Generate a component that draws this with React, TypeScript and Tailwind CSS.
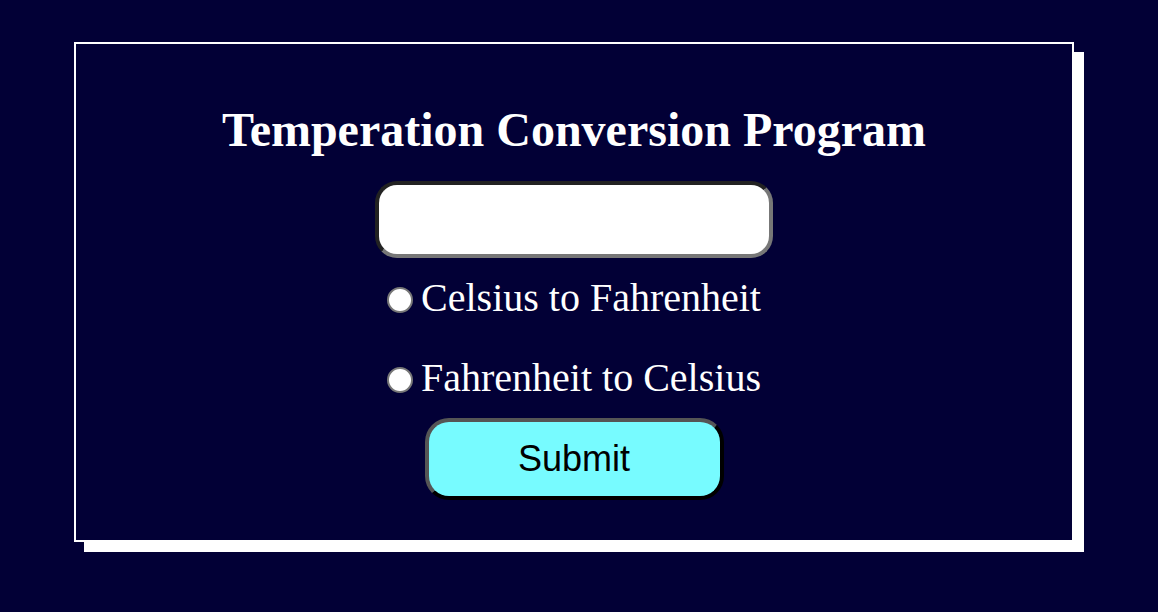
import React, { useState } from 'react';

export default function App() {
  const [value, setValue] = useState('');
  const [mode, setMode] = useState<'c2f' | 'f2c' | ''>('');

  return (
    <div className="min-h-[612px] w-full bg-[#020036] pl-[74px] pt-[42px] pb-[60px]">
      <div className="w-[1000px] h-[500px] border-2 border-white shadow-[10px_10px_0_#ffffff] flex flex-col items-center pt-[62px] font-['Liberation_Serif',serif] text-white">
        <h1 className="text-[48px] font-bold leading-none">Temperation Conversion Program</h1>

        <input
          type="text"
          value={value}
          onChange={(e) => setValue(e.target.value)}
          className="mt-[27px] w-[398px] h-[77px] rounded-[22px] bg-white text-black text-[28px] px-4 outline-none border-4 border-solid border-t-[#222222] border-l-[#222222] border-b-[#777777] border-r-[#777777]"
        />

        <label className="mt-[20px] flex items-center gap-[8px] text-[40px] leading-none">
          <span
            onClick={() => setMode('c2f')}
            className="mt-[4px] w-[26px] h-[26px] rounded-full bg-white border-2 border-[#777777] flex items-center justify-center"
          >
            {mode === 'c2f' && <span className="w-[12px] h-[12px] rounded-full bg-[#1a73e8]" />}
          </span>
          Celsius to Fahrenheit
        </label>

        <label className="mt-[40px] flex items-center gap-[8px] text-[40px] leading-none">
          <span
            onClick={() => setMode('f2c')}
            className="mt-[4px] w-[26px] h-[26px] rounded-full bg-white border-2 border-[#777777] flex items-center justify-center"
          >
            {mode === 'f2c' && <span className="w-[12px] h-[12px] rounded-full bg-[#1a73e8]" />}
          </span>
          Fahrenheit to Celsius
        </label>

        <button className="mt-[20px] w-[299px] h-[82px] rounded-[24px] bg-[#77fbff] text-black text-[36px] font-['Liberation_Sans',Arial,sans-serif] border-4 border-solid border-t-[#555555] border-l-[#555555] border-b-[#000000] border-r-[#000000]">
          Submit
        </button>
      </div>
    </div>
  );
}
